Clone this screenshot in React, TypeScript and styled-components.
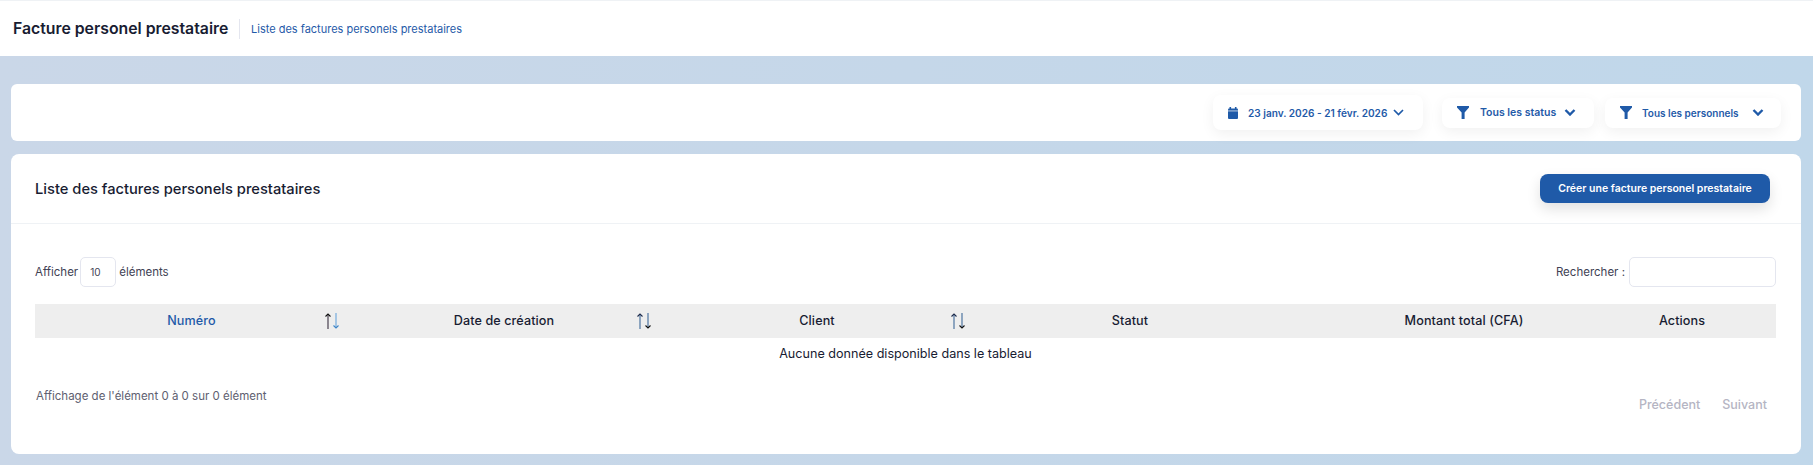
import React from 'react';
import styled, { createGlobalStyle } from 'styled-components';

const GlobalStyle = createGlobalStyle`
  html, body {
    margin: 0;
    padding: 0;
    height: 465px;
    overflow: hidden;
  }
  body {
    font-family: Inter, "Noto Sans", "Liberation Sans", sans-serif;
    color: #181c32;
  }
`;

const Page = styled.div`
  width: 1813px;
  height: 465px;
  display: flex;
  flex-direction: column;
  background: linear-gradient(90deg, #cad7e8 0%, #c0d7ea 100%);
`;

const Header = styled.header`
  height: 55px;
  border-top: 1px solid #eff2f5;
  background: #fff;
  display: flex;
  align-items: center;
  padding-left: 13px;
`;

const PageTitle = styled.h1`
  margin: 0;
  font-size: 15.8px;
  font-weight: 600;
  line-height: 20px;
  color: #181c32;
  width: 226px;
`;

const Breadcrumb = styled.span`
  border-left: 1px solid #e4e6ef;
  height: 20px;
  line-height: 20px;
  padding-left: 11px;
  font-size: 11px;
  color: #1f5aa8;
`;

const Content = styled.main`
  display: flex;
  flex-direction: column;
  gap: 13px;
  padding: 28px 12px 0 11px;
`;

const FilterCard = styled.section`
  height: 57px;
  background: #fff;
  border-radius: 6px;
  display: flex;
  align-items: center;
  justify-content: flex-end;
  gap: 11px;
  padding-right: 20px;
`;

const FilterButton = styled.button<{ $w: number; $h: number; $fs: number; $mr?: number }>`
  width: ${p => p.$w}px;
  height: ${p => p.$h}px;
  margin: 0 ${p => p.$mr ?? 0}px 0 0;
  padding: 0 0 0 15px;
  border: 0;
  border-radius: 8px;
  background: #fff;
  box-shadow: 0 4px 14px rgba(0, 0, 0, 0.06);
  display: flex;
  align-items: center;
  font-family: inherit;
  font-size: ${p => p.$fs}px;
  font-weight: 600;
  color: #1f5aa8;
  white-space: nowrap;
`;

const ButtonLabel = styled.span<{ $ml: number; $mr: number }>`
  margin-left: ${p => p.$ml}px;
  margin-right: ${p => p.$mr}px;
`;

const TableCard = styled.section`
  height: 300px;
  background: #fff;
  border-radius: 8px;
`;

const CardHead = styled.div`
  height: 69px;
  border-bottom: 1px solid #eff2f5;
  display: flex;
  align-items: center;
  justify-content: space-between;
  padding: 0 31px 0 24px;
`;

const CardTitle = styled.h2`
  margin: 0;
  font-size: 14.7px;
  font-weight: 500;
  color: #181c32;
`;

const CreateButton = styled.button`
  width: 230px;
  height: 29px;
  border: 0;
  border-radius: 8px;
  background: #1f5aa8;
  box-shadow: 0 6px 14px rgba(0, 0, 0, 0.12);
  color: #fff;
  font-family: inherit;
  font-size: 10.5px;
  font-weight: 600;
  white-space: nowrap;
`;

const CardBody = styled.div`
  padding: 33px 25px 0 24px;
`;

const Controls = styled.div`
  height: 30px;
  display: flex;
  align-items: center;
  justify-content: space-between;
  font-size: 11.5px;
  color: #3f4254;
`;

const ControlGroup = styled.label`
  display: flex;
  align-items: center;
`;

const LengthBox = styled.span`
  width: 36px;
  height: 30px;
  box-sizing: border-box;
  margin: 0 3px 0 2px;
  padding-left: 9px;
  border: 1px solid #e4e6ef;
  border-radius: 5px;
  display: flex;
  align-items: center;
  font-size: 10px;
`;

const SearchBox = styled.input`
  width: 147px;
  height: 30px;
  box-sizing: border-box;
  margin: 0 0 0 4px;
  border: 1px solid #e4e6ef;
  border-radius: 5px;
  background: #fff;
`;

const Table = styled.table`
  width: 1741px;
  margin-top: 17px;
  border-collapse: collapse;
  table-layout: fixed;
`;

const HeadCell = styled.th<{ $w: number; $active?: boolean; $pr?: number }>`
  width: ${p => p.$w}px;
  height: 34px;
  box-sizing: border-box;
  position: relative;
  padding: 0 ${p => p.$pr ?? 0}px 2px 0;
  background: #eeeeee;
  text-align: center;
  font-size: 12.6px;
  letter-spacing: 0.1px;
  font-weight: 500;
  color: ${p => (p.$active ? '#1f5aa8' : '#181c32')};
`;

const SortMark = styled.svg`
  position: absolute;
  top: 9px;
  right: 8px;
  width: 16px;
  height: 16px;
`;

const EmptyCell = styled.td`
  height: 33px;
  padding: 0 0 2px;
  box-sizing: border-box;
  text-align: center;
  font-size: 12.6px;
  color: #181c32;
`;

const Footer = styled.div`
  display: flex;
  justify-content: space-between;
  padding-left: 1px;
  margin-top: 15px;
`;

const Info = styled.div`
  font-size: 11.5px;
  line-height: 20px;
  color: #5e6070;
`;

const Pager = styled.div`
  display: flex;
  gap: 22px;
  margin: 9px 9px 0 0;
  font-size: 12.5px;
  line-height: 20px;
  font-weight: 500;
  color: #b5b5c3;
`;

const CalendarIcon = () => (
  <svg width="10" height="12" viewBox="0 0 10 12" fill="#1f5aa8">
    <rect x="0" y="1.5" width="10" height="10.5" rx="1" />
    <rect x="1.5" y="0" width="1.6" height="3" />
    <rect x="6.9" y="0" width="1.6" height="3" />
    <rect x="0" y="3.6" width="10" height="0.7" fill="#fff" />
  </svg>
);

const FunnelIcon = () => (
  <svg width="12" height="13" viewBox="0 0 12 13" fill="#1f5aa8">
    <path d="M0 0h12v1.6L7.6 6.4V13H4.6V6.4L0 1.6z" />
  </svg>
);

const Chevron = ({ bold }: { bold?: boolean }) => (
  <svg width={bold ? 12 : 11} height="7" viewBox="0 0 11 7" fill="none" stroke="#1f5aa8" strokeWidth={bold ? 2.4 : 1.7}>
    <path d="M1 1l4.5 4.5L10 1" />
  </svg>
);

const SortArrows = ({ up, down, upHead, downHead }: { up: string; down: string; upHead: string; downHead: string }) => (
  <SortMark viewBox="0 0 16 16">
    <g fill="none" strokeWidth="1.1">
      <path d="M4 1v15" stroke={up} />
      <path d="M1.5 3.5L4 1l2.5 2.5" stroke={upHead} />
      <path d="M12 0v15" stroke={down} />
      <path d="M9.5 12.5L12 15l2.5-2.5" stroke={downHead} />
    </g>
  </SortMark>
);

const App: React.FC = () => {
  return (
    <Page>
      <GlobalStyle />
      <Header>
        <PageTitle>Facture personel prestataire</PageTitle>
        <Breadcrumb>Liste des factures personels prestataires</Breadcrumb>
      </Header>
      <Content>
        <FilterCard>
          <FilterButton $w={210} $h={35} $fs={10.1} $mr={8}>
            <CalendarIcon />
            <ButtonLabel $ml={10} $mr={6}>23 janv. 2026 - 21 févr. 2026</ButtonLabel>
            <Chevron />
          </FilterButton>
          <FilterButton $w={152} $h={30} $fs={10.5}>
            <FunnelIcon />
            <ButtonLabel $ml={11} $mr={8}>Tous les status</ButtonLabel>
            <Chevron bold />
          </FilterButton>
          <FilterButton $w={176} $h={30} $fs={10}>
            <FunnelIcon />
            <ButtonLabel $ml={10} $mr={13}>Tous les personnels</ButtonLabel>
            <Chevron bold />
          </FilterButton>
        </FilterCard>
        <TableCard>
          <CardHead>
            <CardTitle>Liste des factures personels prestataires</CardTitle>
            <CreateButton>Créer une facture personel prestataire</CreateButton>
          </CardHead>
          <CardBody>
            <Controls>
              <ControlGroup>
                Afficher
                <LengthBox>10</LengthBox>
                éléments
              </ControlGroup>
              <ControlGroup>
                Rechercher :
                <SearchBox />
              </ControlGroup>
            </Controls>
            <Table>
              <thead>
                <tr>
                  <HeadCell $w={313} $active>
                    Numéro
                    <SortArrows up="#3a3040" upHead="#111111" down="#6aa6dc" downHead="#3f86c8" />
                  </HeadCell>
                  <HeadCell $w={312}>
                    Date de création
                    <SortArrows up="#3f6a9a" upHead="#1d2a4a" down="#3f6a9a" downHead="#111111" />
                  </HeadCell>
                  <HeadCell $w={314}>
                    Client
                    <SortArrows up="#3f6a9a" upHead="#1d2a4a" down="#3f6a9a" downHead="#111111" />
                  </HeadCell>
                  <HeadCell $w={312}>Statut</HeadCell>
                  <HeadCell $w={356}>Montant total (CFA)</HeadCell>
                  <HeadCell $w={134} $pr={54}>Actions</HeadCell>
                </tr>
              </thead>
              <tbody>
                <tr>
                  <EmptyCell colSpan={6}>Aucune donnée disponible dans le tableau</EmptyCell>
                </tr>
              </tbody>
            </Table>
            <Footer>
              <Info>Affichage de l'élément 0 à 0 sur 0 élément</Info>
              <Pager>
                <span>Précédent</span>
                <span>Suivant</span>
              </Pager>
            </Footer>
          </CardBody>
        </TableCard>
      </Content>
    </Page>
  );
};

export default App;
